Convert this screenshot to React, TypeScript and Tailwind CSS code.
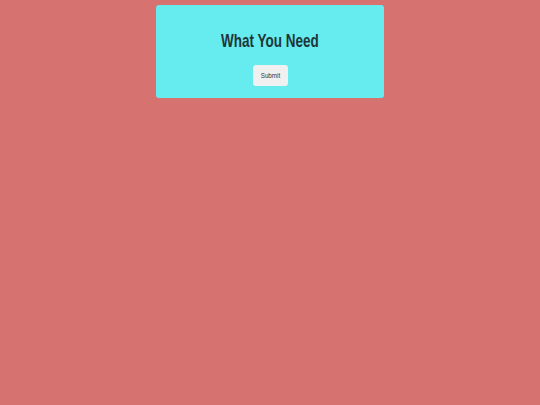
export default function App() {
  return (
    <div className="min-h-[405px] w-full bg-[#d67371] pt-[5px]" style={{ fontFamily: '"Liberation Sans", Arial, sans-serif' }}>
      <div className="mx-auto flex w-[228px] h-[93px] flex-col items-center rounded-[3px] bg-[#66ebee] pt-[27px]">
        <h1 className="inline-block scale-x-[0.71] text-[19px] font-bold leading-[17px] text-[#1f3638]">What You Need</h1>
        <button className="mt-[16px] flex h-[21px] w-[35px] items-center justify-center rounded-[3px] bg-[#f0f0f0] text-[#333]">
          <span className="inline-block scale-x-[0.78] text-[8px] leading-[8px]">Submit</span>
        </button>
      </div>
    </div>
  );
}
